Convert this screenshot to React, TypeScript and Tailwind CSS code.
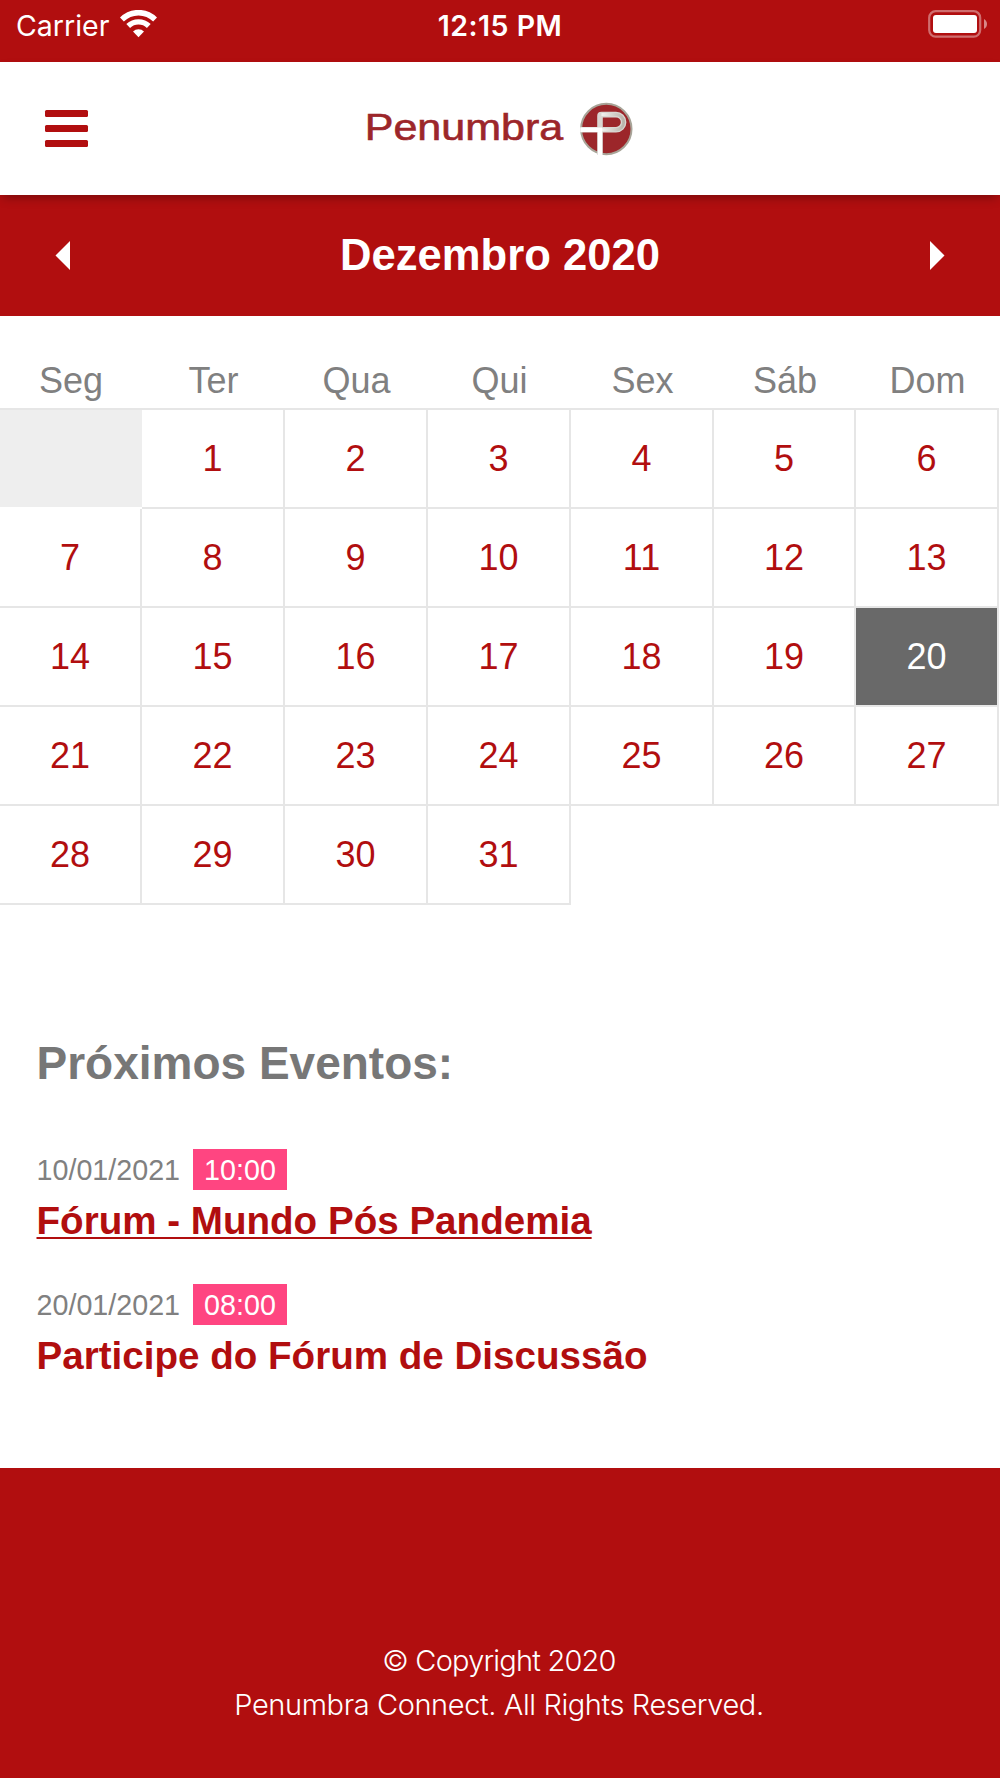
import React from 'react';

const weekDays = ['Seg', 'Ter', 'Qua', 'Qui', 'Sex', 'Sáb', 'Dom'];
const days = Array.from({ length: 31 }, (_, i) => i + 1);
const today = 20;

const events = [
  { date: '10/01/2021', time: '10:00', title: 'Fórum - Mundo Pós Pandemia', underline: true },
  { date: '20/01/2021', time: '08:00', title: 'Participe do Fórum de Discussão', underline: false },
];

const WifiIcon = () => (
  <svg width="37" height="28" viewBox="0 0 37 28" fill="none">
    <path d="M1.9 9.5 A23.6 23.6 0 0 1 35.1 9.5" stroke="white" strokeWidth="5.6" />
    <path d="M8.2 16 A14.8 14.8 0 0 1 28.8 16" stroke="white" strokeWidth="5.4" />
    <path d="M13 21.6 A7.8 7.8 0 0 1 24 21.6 L18.5 27.2 Z" fill="white" />
  </svg>
);

const BatteryIcon = () => (
  <svg width="60" height="28" viewBox="0 0 60 28">
    <rect x="1.2" y="1.2" width="51" height="25.4" rx="6.5" fill="none" stroke="white" strokeOpacity="0.4" strokeWidth="2.2" />
    <rect x="5" y="5" width="44" height="18" rx="3" fill="white" />
    <path d="M56 9 C60 11 60 17 56 19 Z" fill="white" fillOpacity="0.5" />
  </svg>
);

const Logo = () => (
  <svg width="270" height="60" viewBox="0 0 270 60" className="block">
    <defs>
      <linearGradient id="bowl" x1="0" y1="0" x2="1" y2="0">
        <stop offset="0" stopColor="#f4f3f1" />
        <stop offset="1" stopColor="#b9b4ab" />
      </linearGradient>
    </defs>
    <text
      x="-0.3"
      y="40.5"
      fontSize="36"
      fill="#9c262a"
      stroke="#9c262a"
      strokeWidth="0.6"
      textLength="198.5"
      lengthAdjust="spacingAndGlyphs"
      className="font-['Liberation_Sans',sans-serif]"
    >
      Penumbra
    </text>
    <circle cx="241.3" cy="30" r="25.2" fill="#9c262a" stroke="#a8a498" strokeWidth="2" />
    <path d="M235 56 V17 Q235 15.6 236.5 15.6 H251 A7.6 7.6 0 0 1 251 30.8 H215.3" fill="none" stroke="#d9d6d1" strokeWidth="5.6" />
    <path d="M236.5 15.6 H251 A7.6 7.6 0 0 1 251 30.8 H236" fill="none" stroke="url(#bowl)" strokeWidth="3" />
    <path d="M215.3 30.8 H237 M235 29 V56" fill="none" stroke="white" strokeWidth="4.4" />
  </svg>
);

const App = () => {
  return (
    <div className="flex h-[1778px] w-[1000px] flex-col overflow-hidden bg-white font-['Liberation_Sans',sans-serif]">
      {/* Status bar */}
      <div className="grid h-[62px] grid-cols-3 items-start bg-[#b10e0f] pt-[10px] font-['Inter',sans-serif] text-[28.5px] leading-[32px] text-white">
        <div className="flex items-start gap-[11px] pl-4">
          <span>Carrier</span>
          <WifiIcon />
        </div>
        <span className="text-center font-semibold tracking-[0.5px]">12:15 PM</span>
        <div className="flex justify-end pr-[12px]">
          <BatteryIcon />
        </div>
      </div>

      {/* Header */}
      <header className="relative z-10 grid h-[133px] grid-cols-[1fr_270px_1fr] items-center bg-white shadow-[0_5px_10px_-3px_rgba(0,0,0,0.35)]">
        <button className="ml-[45px] flex w-[43px] flex-col gap-2">
          <span className="h-[7px] rounded-[1.5px] bg-[#b10e0f]" />
          <span className="h-[7px] rounded-[1.5px] bg-[#b10e0f]" />
          <span className="h-[7px] rounded-[1.5px] bg-[#b10e0f]" />
        </button>
        <Logo />
      </header>

      {/* Month selector */}
      <div className="flex h-[121px] items-center justify-between bg-[#b10e0f] px-[55px] text-white">
        <svg width="15" height="29" viewBox="0 0 15 29">
          <path d="M15 0 V29 L0.5 14.5 Z" fill="white" />
        </svg>
        <h1 className="pb-[2px] text-[43.6px] leading-[50px] font-bold">Dezembro 2020</h1>
        <svg width="15" height="29" viewBox="0 0 15 29">
          <path d="M0 0 V29 L14.5 14.5 Z" fill="white" />
        </svg>
      </div>

      {/* Calendar */}
      <div className="pt-[45px] text-center text-[36px]">
        <div className="grid grid-cols-[142px_143px_143px_143px_143px_142px_143px] pb-[7px] leading-[40px] text-[#808080]">
          {weekDays.map((day) => (
            <div key={day}>{day}</div>
          ))}
        </div>
        <div className="grid w-[999px] auto-rows-[99px] grid-cols-[142px_143px_143px_143px_143px_142px_143px] border-t-2 border-[#e6e6e6] leading-[98px] text-[#b10e0f]">
          <div className="border-b-2 border-white bg-[#eeeeee]" />
          {days.map((day) => (
            <div
              key={day}
              className={`border-r-2 border-b-2 border-[#e6e6e6] ${day === today ? 'bg-[#696969] text-white' : ''}`}
            >
              {day}
            </div>
          ))}
        </div>
      </div>

      {/* Upcoming events */}
      <section className="flex-1 px-[36.5px] pt-[132px]">
        <h2 className="text-[46px] leading-[52px] font-bold text-[#777777]">Próximos Eventos:</h2>
        <ul className="mt-[60px] flex flex-col gap-[39px]">
          {events.map((event) => (
            <li key={event.date}>
              <div className="flex h-[41px] items-start gap-[13px] text-[28.7px] leading-[43px]">
                <span className="text-[#808080]">{event.date}</span>
                <span className="h-[41px] bg-[#ff4581] px-[11px] text-white">{event.time}</span>
              </div>
              <a
                className={`mt-[7px] block text-[38.6px] leading-[48px] font-bold text-[#b10e0f] ${
                  event.underline ? 'underline decoration-2 underline-offset-[3px] [text-decoration-skip-ink:none]' : ''
                }`}
              >
                {event.title}
              </a>
            </li>
          ))}
        </ul>
      </section>

      {/* Footer */}
      <footer className="h-[310px] bg-[#b10e0f] pt-[171px] pr-[2px] text-center font-['Inter',sans-serif] text-[29px] leading-[43.5px] font-light text-white">
        <p className="tracking-[-0.8px]">© Copyright 2020</p>
        <p className="tracking-[-0.4px]">Penumbra Connect. All Rights Reserved.</p>
      </footer>
    </div>
  );
};

export default App;
